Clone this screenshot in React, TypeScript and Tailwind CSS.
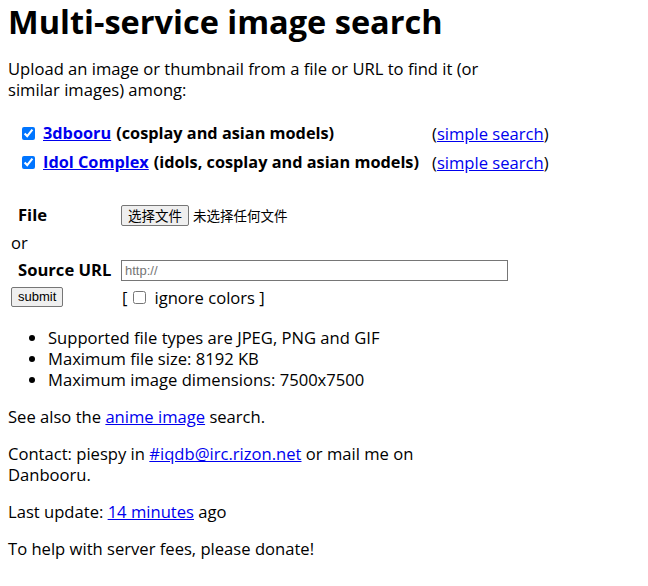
import React from "react";

const services = [
  { name: "3dbooru", desc: "(cosplay and asian models)" },
  { name: "Idol Complex", desc: "(idols, cosplay and asian models)" },
];

export default function App() {
  return (
    <div className="min-h-screen bg-white px-2 text-[16.6px] leading-[21px] text-black font-['Open_Sans','Noto_Sans_CJK_SC',sans-serif]">
      <h1 className="text-[32.5px] font-bold leading-[44px]">Multi-service image search</h1>

      <p className="mt-[14px]">
        Upload an image or thumbnail from a file or URL to find it (or
        <br />
        similar images) among:
      </p>

      {/* Services */}
      <div className="mt-[19px] grid grid-cols-[410px_auto] pl-[14px]">
        {services.map((s) => (
          <React.Fragment key={s.name}>
            <label className="flex h-[29px] items-center text-[16.3px] font-bold">
              <input type="checkbox" defaultChecked className="mr-[8px] h-[13px] w-[13px]" />
              <a href="#" className="text-[#0000ee] underline">
                {s.name}
              </a>
              <span className="ml-[5px]">{s.desc}</span>
            </label>
            <div className="flex h-[29px] items-center">
              (<a href="#" className="text-[#0000ee] underline">simple search</a>)
            </div>
          </React.Fragment>
        ))}
      </div>

      {/* Upload form */}
      <div className="mt-[24px] grid grid-cols-[113px_auto] items-center">
        <div className="h-[28px] pl-[10px] font-bold leading-[28px]">File</div>
        <div className="flex h-[28px] items-center">
          <button className="h-[21px] rounded-[2px] border border-[#767676] bg-[#efefef] px-[6px] text-[13.5px] leading-[19px] font-['Noto_Sans_CJK_SC',sans-serif]">
            选择文件
          </button>
          <span className="ml-[4px] text-[13.5px] font-['Noto_Sans_CJK_SC',sans-serif]">未选择任何文件</span>
        </div>
        <div className="col-span-2 h-[28px] pl-[3px] leading-[28px]">or</div>
        <div className="h-[26px] pl-[10px] font-bold leading-[26px]">Source URL</div>
        <div className="flex h-[26px] items-center">
          <input
            type="text"
            placeholder="http://"
            className="h-[21px] w-[387px] border border-[#767676] px-[3px] text-[13px] font-['Liberation_Sans',sans-serif] placeholder:text-[#757575]"
          />
        </div>
        <div className="flex h-[28px] items-center pl-[3px]">
          <button className="h-[20px] rounded-[2px] border border-[#767676] bg-[#efefef] px-[6px] text-[13px] leading-[18px] font-['Liberation_Sans',sans-serif]">
            submit
          </button>
        </div>
        <div className="flex h-[28px] items-center pl-[1px]">
          <span>[</span>
          <input type="checkbox" className="ml-[6px] mr-[8px] h-[13px] w-[13px]" />
          <span>ignore colors ]</span>
        </div>
      </div>

      <ul className="mt-[16px] list-disc pl-[40px]">
        <li>Supported file types are JPEG, PNG and GIF</li>
        <li>Maximum file size: 8192 KB</li>
        <li>Maximum image dimensions: 7500x7500</li>
      </ul>

      <p className="mt-[16px]">
        See also the{" "}
        <a href="#" className="text-[#0000ee] underline">
          anime image
        </a>{" "}
        search.
      </p>

      <p className="mt-[16px]">
        Contact: piespy in{" "}
        <a href="#" className="text-[#0000ee] underline">
          #iqdb@irc.rizon.net
        </a>{" "}
        or mail me on
        <br />
        Danbooru.
      </p>

      <p className="mt-[16px]">
        Last update:{" "}
        <a href="#" className="text-[#0000ee] underline">
          14 minutes
        </a>{" "}
        ago
      </p>

      <p className="mt-[16px]">To help with server fees, please donate!</p>
    </div>
  );
}
